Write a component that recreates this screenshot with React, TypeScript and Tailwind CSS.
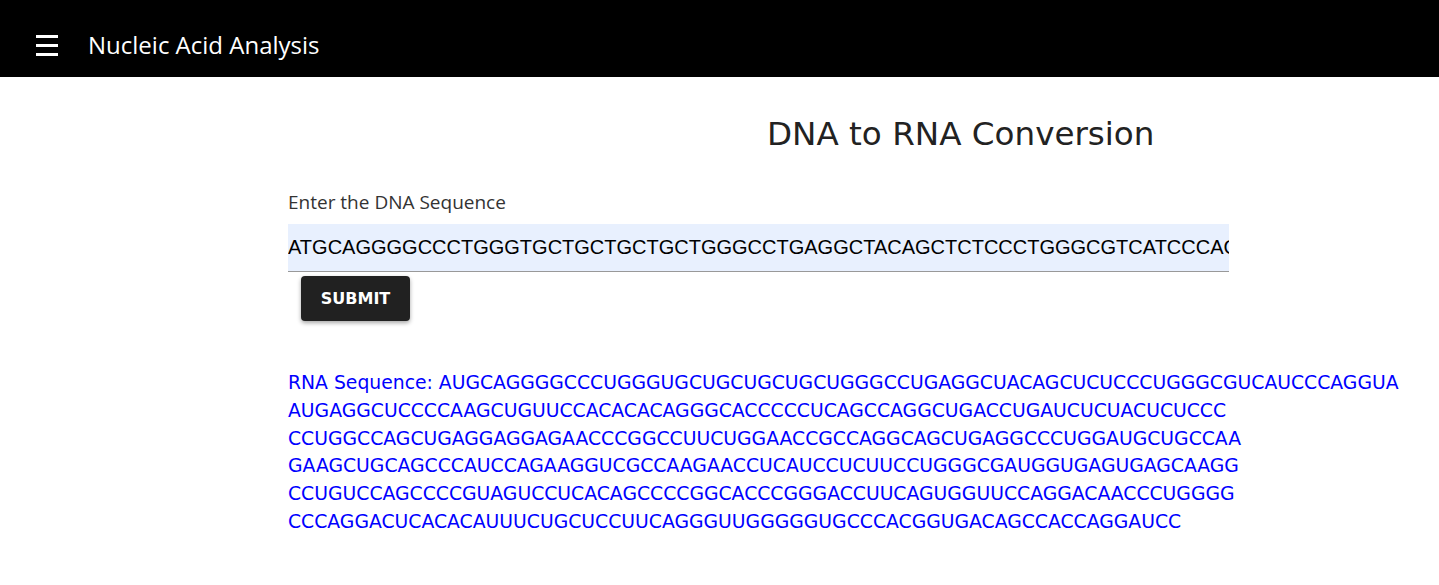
import React, { useState } from "react";

const rnaLines = [
  "AUGCAGGGGCCCUGGGUGCUGCUGCUGCUGGGCCUGAGGCUACAGCUCUCCCUGGGCGUCAUCCCAGGUA",
  "AUGAGGCUCCCCAAGCUGUUCCACACACAGGGCACCCCCUCAGCCAGGCUGACCUGAUCUCUACUCUCCC",
  "CCUGGCCAGCUGAGGAGGAGAACCCGGCCUUCUGGAACCGCCAGGCAGCUGAGGCCCUGGAUGCUGCCAA",
  "GAAGCUGCAGCCCAUCCAGAAGGUCGCCAAGAACCUCAUCCUCUUCCUGGGCGAUGGUGAGUGAGCAAGG",
  "CCUGUCCAGCCCCGUAGUCCUCACAGCCCCGGCACCCGGGACCUUCAGUGGUUCCAGGACAACCCUGGGG",
  "CCCAGGACUCACACAUUUCUGCUCCUUCAGGGUUGGGGGUGCCCACGGUGACAGCCACCAGGAUCC",
];

const dna = rnaLines.join("").replace(/U/g, "T");

export default function App() {
  const [seq, setSeq] = useState(dna);

  return (
    <div className="min-h-screen bg-white">
      <header className="h-[77px] bg-black flex items-center pt-[13px] px-9 gap-[30px]">
        <button className="flex flex-col gap-[6px] w-[22px]">
          <span className="block h-[3px] bg-white" />
          <span className="block h-[3px] bg-white" />
          <span className="block h-[3px] bg-white" />
        </button>
        <h1 className="font-['Open_Sans',sans-serif] text-white text-[24px] leading-none">Nucleic Acid Analysis</h1>
      </header>

      <main className="pl-[288px] pr-[38px]">
        <h2 className="pt-[33px] pl-[479px] font-['DejaVu_Sans',sans-serif] text-[#222] text-[32.6px] leading-[48px]">
          DNA to RNA Conversion
        </h2>

        <label className="block mt-[32px] font-['Open_Sans',sans-serif] text-[#333] text-[19px] leading-[24px]">
          Enter the DNA Sequence
        </label>
        <input
          value={seq}
          onChange={(e) => setSeq(e.target.value)}
          className="mt-[10px] w-[941px] h-[48px] bg-[#e8f0fe] border-b border-[#999] outline-none font-['Liberation_Sans',sans-serif] text-[20px] text-black"
        />
        <button className="block ml-[13px] mt-[4px] w-[109px] h-[45px] bg-[#212121] rounded shadow-[0_2px_4px_rgba(0,0,0,0.35)] font-['DejaVu_Sans',sans-serif] font-bold text-white text-[16px]">
          SUBMIT
        </button>

        <div className="mt-[48px] font-['DejaVu_Sans',sans-serif] text-[18.8px] leading-[27.8px] text-[#0000ff]">
          {rnaLines.map((line, i) => (
            <div key={i} className="whitespace-nowrap">
              {i === 0 ? "RNA Sequence: " : ""}
              {line}
            </div>
          ))}
        </div>
      </main>
    </div>
  );
}
